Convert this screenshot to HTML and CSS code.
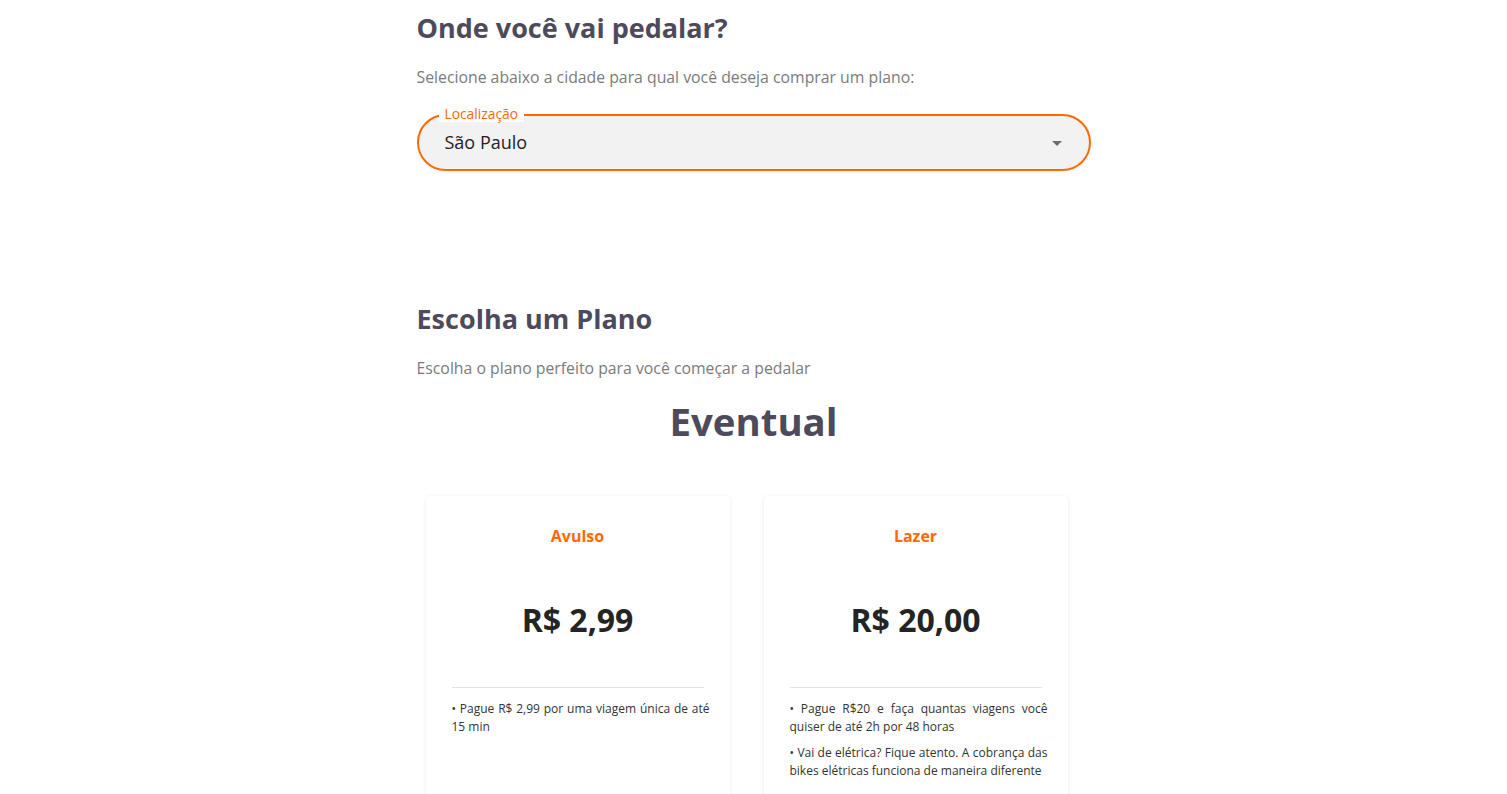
FILE: index.html
```html
<!DOCTYPE html>
<html lang="pt-BR">
<head>
<meta charset="utf-8">
<title>Planos</title>
<link rel="stylesheet" href="styles.css">
</head>
<body>
<main class="page">
  <section class="city">
    <h1 class="title">Onde você vai pedalar?</h1>
    <p class="subtitle">Selecione abaixo a cidade para qual você deseja comprar um plano:</p>
    <div class="select">
      <span class="select-label">Localização</span>
      <span class="select-value">São Paulo</span>
      <span class="select-arrow"></span>
    </div>
  </section>

  <section class="plans">
    <h2 class="title">Escolha um Plano</h2>
    <p class="subtitle">Escolha o plano perfeito para você começar a pedalar</p>
    <h3 class="group">Eventual</h3>
    <div class="cards">
      <article class="card">
        <div class="card-name">Avulso</div>
        <div class="card-price">R$ 2,99</div>
        <hr class="card-divider">
        <p class="card-item">• Pague R$ 2,99 por uma viagem única de até 15 min</p>
      </article>
      <article class="card">
        <div class="card-name">Lazer</div>
        <div class="card-price">R$ 20,00</div>
        <hr class="card-divider">
        <p class="card-item">• Pague R$20 e faça quantas viagens você quiser de até 2h por 48 horas</p>
        <p class="card-item">• Vai de elétrica? Fique atento. A cobrança das bikes elétricas funciona de maneira diferente</p>
      </article>
    </div>
  </section>
</main>
</body>
</html>
```

FILE: styles.css
```css
* { box-sizing: border-box; }

html, body {
  margin: 0;
  padding: 0;
  background: #ffffff;
  font-family: "Open Sans", "Noto Sans", "Liberation Sans", sans-serif;
}

.page {
  width: 674px;
  margin: 0 auto;
  padding-top: 10px;
}

.title {
  margin: 0;
  font-size: 27px;
  line-height: 36px;
  font-weight: 700;
  color: #4d4a5c;
}

.subtitle {
  margin: 19px 0 0;
  font-size: 15.8px;
  line-height: 24px;
  color: #7b7b7b;
}

.select {
  position: relative;
  margin-top: 25px;
  height: 57px;
  border: 2px solid #ff6a00;
  border-radius: 29px;
  background: #f2f2f2;
  display: flex;
  align-items: center;
  padding: 0 27px 2px 26px;
}

.select-label {
  position: absolute;
  top: -10px;
  left: 20px;
  padding: 0 6px 0 6px;
  background: #ffffff;
  font-size: 13.8px;
  line-height: 16px;
  color: #ff6a00;
}

.select-value {
  flex: 1;
  font-size: 18px;
  line-height: 24px;
  color: #222222;
}

.select-arrow {
  width: 0;
  height: 0;
  border-left: 5px solid transparent;
  border-right: 5px solid transparent;
  border-top: 5px solid #6e6e6e;
  margin-top: 4px;
}

.plans {
  margin-top: 130px;
}

.group {
  margin: 17px 0 0;
  text-align: center;
  font-size: 38.4px;
  line-height: 48px;
  font-weight: 700;
  color: #4d4a5c;
}

.cards {
  display: flex;
  gap: 34px;
  margin-top: 51px;
  padding-left: 9px;
}

.card {
  width: 304px;
  min-height: 330px;
  background: #ffffff;
  border-radius: 4px;
  box-shadow: 0 1px 4px rgba(0, 0, 0, 0.09);
  padding: 28px 20px 20px 26px;
}

.card-name {
  text-align: center;
  font-size: 16px;
  line-height: 24px;
  font-weight: 700;
  color: #ff6a00;
  padding-right: 6px;
}

.card-price {
  margin-top: 50px;
  text-align: center;
  font-size: 32px;
  line-height: 44px;
  font-weight: 700;
  color: #242424;
  padding-right: 6px;
}

.card-divider {
  margin: 45px 6px 0 0;
  border: 0;
  border-top: 1px solid #e2e2e2;
  height: 0;
}

.card-item {
  margin: 12px 0 0;
  font-size: 12px;
  line-height: 18px;
  color: #333333;
  text-align: justify;
}

.card-item + .card-item {
  margin-top: 8px;
}
```
